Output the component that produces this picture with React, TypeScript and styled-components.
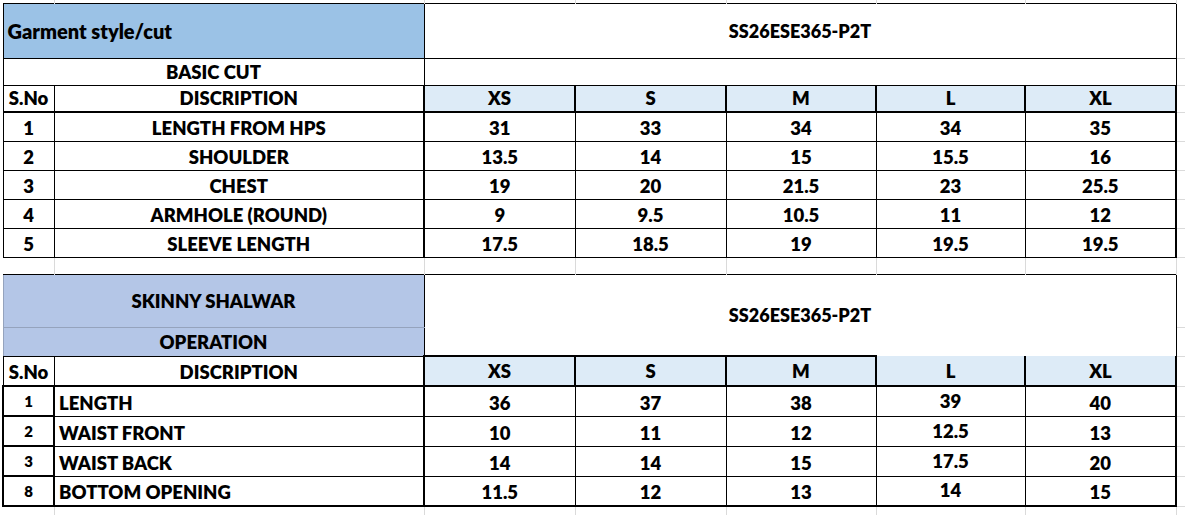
import React from 'react';
import styled, { createGlobalStyle } from 'styled-components';

type Edge = 'thin' | 'thick' | 'grid' | 'soft' | undefined;

const edge = (e: Edge) =>
  e === 'thick'
    ? '2px solid #000'
    : e === 'thin'
    ? '1px solid #000'
    : e === 'grid'
    ? '1px solid #dadada'
    : e === 'soft'
    ? '1px solid #95a3bd'
    : 'none';

const GlobalStyle = createGlobalStyle`
  html, body { margin: 0; padding: 0; background: #ffffff; }
  body { font-family: Lato, "Liberation Sans", sans-serif; color: #000; }
`;

const Sheet = styled.table`
  border-collapse: collapse;
  table-layout: fixed;
  width: 1185px;
  font-weight: 800;
  font-size: 19px;
`;

const Row = styled.tr<{ $h: number }>`
  height: ${(p) => p.$h}px;
`;

interface CellProps {
  $t?: Edge;
  $r?: Edge;
  $b?: Edge;
  $l?: Edge;
  $bg?: string;
  $align?: 'left' | 'center';
  $mid?: boolean;
  $lift?: number;
  $size?: number;
}

const Cell = styled.td<CellProps>`
  padding: 0;
  padding-left: ${(p) => (p.$align === 'left' ? '4px' : '0')};
  padding-bottom: ${(p) => (p.$mid ? 0 : 3 + (p.$lift || 0))}px;
  border-top: ${(p) => edge(p.$t)};
  border-right: ${(p) => edge(p.$r)};
  border-bottom: ${(p) => edge(p.$b)};
  border-left: ${(p) => edge(p.$l)};
  background: ${(p) => p.$bg || 'transparent'};
  text-align: ${(p) => p.$align || 'center'};
  vertical-align: ${(p) => (p.$mid ? 'middle' : 'bottom')};
  white-space: nowrap;
  overflow: visible;
  line-height: 20px;
  font-size: ${(p) => p.$size || 18.5}px;
  font-weight: 800;
`;

const TitleCell = styled(Cell)``;

const SizeHead = styled(Cell)`
  background: #ddebf7;
`;

const DescCell = styled(Cell)``;
const NumCell = styled(Cell)``;
const ValueCell = styled(Cell)``;

const GridCell = styled(Cell)`
  padding: 0;
  line-height: 0;
  font-size: 0;
`;

/* gutter, A..G, trailing strip */
const COLS = [3, 51, 370, 151, 151, 150, 149, 151, 9];
const SIZES = ['XS', 'S', 'M', 'L', 'XL'];
const CODE = 'SS26ESE365-P2T';

const BASIC: [string, string, string[]][] = [
  ['1', 'LENGTH FROM HPS', ['31', '33', '34', '34', '35']],
  ['2', 'SHOULDER', ['13.5', '14', '15', '15.5', '16']],
  ['3', 'CHEST', ['19', '20', '21.5', '23', '25.5']],
  ['4', 'ARMHOLE (ROUND)', ['9', '9.5', '10.5', '11', '12']],
  ['5', 'SLEEVE LENGTH', ['17.5', '18.5', '19', '19.5', '19.5']],
];

const SHALWAR: [string, string, string[]][] = [
  ['1', 'LENGTH', ['36', '37', '38', '39', '40']],
  ['2', 'WAIST FRONT', ['10', '11', '12', '12.5', '13']],
  ['3', 'WAIST BACK', ['14', '14', '15', '17.5', '20']],
  ['8', 'BOTTOM OPENING', ['11.5', '12', '13', '14', '15']],
];

const GridStrip: React.FC<{ h: number }> = ({ h }) => (
  <Row $h={h}>
    {COLS.map((_, i) => (
      <GridCell key={i} $r={i > 0 && i < 8 ? 'grid' : undefined} />
    ))}
  </Row>
);

const Gutter = () => <GridCell />;
const Tail = () => <GridCell $b="grid" />;

export default function App() {
  return (
    <>
      <GlobalStyle />
      <Sheet>
        <colgroup>
          {COLS.map((w, i) => (
            <col key={i} style={{ width: w }} />
          ))}
        </colgroup>
        <tbody>
          <GridStrip h={3} />

          {/* ---------- BASIC CUT table ---------- */}
          <Row $h={55}>
            <Gutter />
            <TitleCell colSpan={2} $align="left" $mid $size={20} $bg="#9bc2e6" $t="thin" $l="thin" $b="thin" $r="thin">
              Garment style/cut
            </TitleCell>
            <TitleCell colSpan={5} $mid $size={18} $t="thin" $r="thin" $b="thin">
              {CODE}
            </TitleCell>
            <Tail />
          </Row>
          <Row $h={27}>
            <Gutter />
            <TitleCell colSpan={2} $l="thin" $r="thin" $b="thin">
              BASIC CUT
            </TitleCell>
            <TitleCell colSpan={5} $r="thin" $b="thin" />
            <Tail />
          </Row>
          <Row $h={27}>
            <Gutter />
            <NumCell $l="thin" $r="thin" $b="thick">S.No</NumCell>
            <DescCell $r="thick" $b="thick">DISCRIPTION</DescCell>
            {SIZES.map((s) => (
              <SizeHead key={s} $r="thick" $b="thick">
                {s}
              </SizeHead>
            ))}
            <Tail />
          </Row>
          {BASIC.map(([n, d, v]) => (
            <Row $h={29} key={n}>
              <Gutter />
              <NumCell $l="thin" $r="thin" $b="thin">{n}</NumCell>
              <DescCell $r="thick" $b="thin">{d}</DescCell>
              {v.map((x, i) => (
                <ValueCell key={i} $r={i === 4 ? 'thick' : 'thin'} $b="thin">
                  {x}
                </ValueCell>
              ))}
              <Tail />
            </Row>
          ))}

          <GridStrip h={17} />

          {/* ---------- SKINNY SHALWAR table ---------- */}
          <Row $h={53}>
            <Gutter />
            <TitleCell colSpan={2} $mid $bg="#b4c6e7" $t="thin" $l="soft" $b="soft" $r="thin">
              SKINNY SHALWAR
            </TitleCell>
            <TitleCell colSpan={5} rowSpan={2} $mid $size={18} $t="thin" $r="thin">
              {CODE}
            </TitleCell>
            <Tail />
          </Row>
          <Row $h={29}>
            <Gutter />
            <TitleCell colSpan={2} $mid $bg="#b4c6e7" $l="soft" $b="thin" $r="thin">
              OPERATION
            </TitleCell>
            <Tail />
          </Row>
          <Row $h={30}>
            <Gutter />
            <NumCell $l="thin" $r="thin" $b="thick">S.No</NumCell>
            <DescCell $r="thick" $b="thick">DISCRIPTION</DescCell>
            {SIZES.map((s, i) => (
              <SizeHead key={s} $t={i < 3 ? 'thick' : undefined} $r="thick" $b="thick" $lift={1}>
                {s}
              </SizeHead>
            ))}
            <Tail />
          </Row>
          {SHALWAR.map(([n, d, v], ri) => {
            const last = ri === SHALWAR.length - 1;
            return (
              <Row $h={30} key={n + d}>
                <Gutter />
                <NumCell $l="thick" $r="thick" $b="thick" $size={15} $lift={1}>
                  {n}
                </NumCell>
                <DescCell $align="left" $r="thick" $b={last ? 'thick' : 'thin'}>
                  {d}
                </DescCell>
                {v.map((x, i) => (
                  <ValueCell
                    key={i}
                    $r={i === 4 ? 'thick' : 'thin'}
                    $b={last ? 'thick' : 'thin'}
                    $lift={i === 3 ? 2 : 0}
                  >
                    {x}
                  </ValueCell>
                ))}
                <Tail />
              </Row>
            );
          })}
          <GridStrip h={9} />
        </tbody>
      </Sheet>
    </>
  );
}
